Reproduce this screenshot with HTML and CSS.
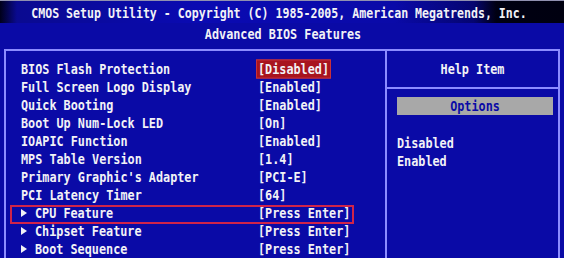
FILE: index.html
```html
<!DOCTYPE html>
<html>
<head>
<meta charset="utf-8">
<link rel="stylesheet" href="styles.css">
</head>
<body>
<div class="screen">
  <div class="header">
    <div class="hline hline1"><span class="t">CMOS Setup Utility - Copyright (C) 1985-2005, American Megatrends, Inc.</span></div>
    <div class="hline hline2"><span class="t">Advanced BIOS Features</span></div>
  </div>
  <div class="frame">
    <div class="items">
      <div class="row"><span class="label"><span class="t">BIOS Flash Protection</span></span><span class="value"><span class="t sel">[Disabled]</span></span></div>
      <div class="row"><span class="label"><span class="t">Full Screen Logo Display</span></span><span class="value"><span class="t">[Enabled]</span></span></div>
      <div class="row"><span class="label"><span class="t">Quick Booting</span></span><span class="value"><span class="t">[Enabled]</span></span></div>
      <div class="row"><span class="label"><span class="t">Boot Up Num-Lock LED</span></span><span class="value"><span class="t">[On]</span></span></div>
      <div class="row"><span class="label"><span class="t">IOAPIC Function</span></span><span class="value"><span class="t">[Enabled]</span></span></div>
      <div class="row"><span class="label"><span class="t">MPS Table Version</span></span><span class="value"><span class="t">[1.4]</span></span></div>
      <div class="row"><span class="label"><span class="t">Primary Graphic's Adapter</span></span><span class="value"><span class="t">[PCI-E]</span></span></div>
      <div class="row"><span class="label"><span class="t">PCI Latency Timer</span></span><span class="value"><span class="t">[64]</span></span></div>
      <div class="row sub marked"><span class="label"><i class="arrow"></i><span class="t">CPU Feature</span></span><span class="value"><span class="t">[Press Enter]</span></span></div>
      <div class="row sub"><span class="label"><i class="arrow"></i><span class="t">Chipset Feature</span></span><span class="value"><span class="t">[Press Enter]</span></span></div>
      <div class="row sub"><span class="label"><i class="arrow"></i><span class="t">Boot Sequence</span></span><span class="value"><span class="t">[Press Enter]</span></span></div>
    </div>
    <div class="help">
      <div class="help-title"><span class="t">Help Item</span></div>
      <div class="help-body">
        <div class="options"><span class="t">Options</span></div>
        <div class="help-list">
          <div class="hrow"><span class="t">Disabled</span></div>
          <div class="hrow"><span class="t">Enabled</span></div>
        </div>
      </div>
    </div>
  </div>
</div>
</body>
</html>
```
FILE: styles.css
```css
html, body {
  margin: 0;
  padding: 0;
  background: #0a0aa6;
}
.screen {
  width: 564px;
  height: 258px;
  overflow: hidden;
  background: #0a0aa6;
  color: #f2f2f6;
  font-family: "DejaVu Sans Mono", "Liberation Mono", monospace;
  font-weight: bold;
  font-size: 11.8px;
  line-height: 18px;
}
.t {
  display: inline-block;
  transform: scaleY(1.22);
  white-space: pre;
}
.header {
  height: 49px;
  display: flex;
  flex-direction: column;
}
.hline {
  text-align: center;
}
.hline1 {
  height: 23px;
  line-height: 25px;
  font-size: 11.6px;
  background: linear-gradient(to right, #00001a 0, #0a0a90 3%, #0a0ab2 35%, #0a0aa8 70%, #050570 84%, #000012 88%, #000010 100%);
  border-top: 1px solid #9090b0;
  box-sizing: border-box;
  padding-right: 6px;
}
.hline2 {
  height: 26px;
  line-height: 22px;
  padding-left: 2px;
}
.frame {
  margin-left: 4px;
  width: 556px;
  height: 209px;
  box-sizing: border-box;
  border: 2px solid #8c8cff;
  border-bottom: none;
  display: grid;
  grid-template-columns: 379px 1fr;
}
.items {
  padding: 9px 0 0 15px;
  display: flex;
  flex-direction: column;
}
.row {
  position: relative;
  display: grid;
  grid-template-columns: 237px 1fr;
  height: 18px;
}
.label {
  display: flex;
  align-items: center;
}
.value {
  display: flex;
  align-items: center;
}
.sel {
  background: #a8141e;
  box-shadow: 0 0 0 1px #c8303a;
  padding: 0 1px;
  margin-left: -1px;
  line-height: 14px;
}
.arrow {
  display: inline-block;
  width: 0;
  height: 0;
  border-left: 6px solid #f2f2f6;
  border-top: 4px solid transparent;
  border-bottom: 4px solid transparent;
  margin-right: 8px;
}
.marked::before {
  content: "";
  position: absolute;
  left: -11px;
  top: 1px;
  width: 344px;
  height: 19px;
  box-sizing: border-box;
  border: 2px solid #d0244a;
}
.help {
  border-left: 2px solid #8c8cff;
  display: flex;
  flex-direction: column;
}
.help-title {
  height: 36px;
  line-height: 36px;
  text-align: center;
  border-bottom: 2px solid #8c8cff;
}
.help-body {
  padding: 8px 5px 0 10px;
}
.options {
  background: #a8a8a8;
  color: #0a0aa6;
  text-align: center;
  height: 18px;
  line-height: 18px;
}
.help-list {
  padding-top: 19px;
}
.hrow {
  height: 18px;
}
```
